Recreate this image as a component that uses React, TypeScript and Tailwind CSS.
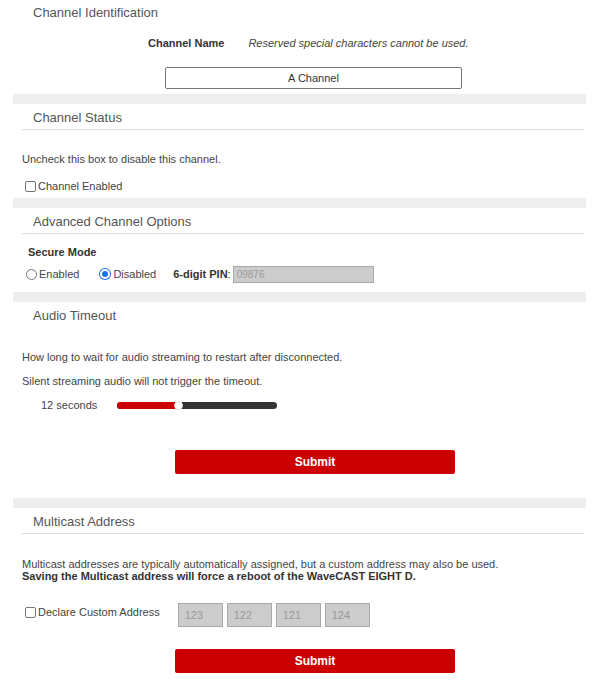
import React from "react";

const font = { fontFamily: '"Liberation Sans", Arial, sans-serif' };

function Band() {
  return <div className="h-[10px] bg-[#eeeeee]" />;
}

function Heading({ title, line = true }: { title: string; line?: boolean }) {
  return (
    <div
      className={
        "h-[26px] ml-[9px] mr-[2px] pl-[11px] pt-[2px] flex items-center text-[13px] text-[#555]" +
        (line ? " border-b border-[#dddddd]" : "")
      }
    >
      {title}
    </div>
  );
}

function Check() {
  return <span className="inline-block w-[11px] h-[11px] border border-[#767676] rounded-[2px] bg-white mr-[2px]" />;
}

function SubmitBtn() {
  return (
    <div className="ml-[162px] w-[280px] h-[24px] bg-[#cc0000] rounded-[2px] flex items-center justify-center text-white text-[12px] font-bold">
      Submit
    </div>
  );
}

export default function App() {
  return (
    <div className="w-[596px] h-[689px] bg-white text-[11px] text-[#333]" style={font}>
      <div className="ml-[13px] w-[573px]">
        {/* Channel Identification */}
        <div className="h-[25px] pl-[20px] flex items-center text-[13px] text-[#555]">Channel Identification</div>
        <div className="h-[36px] pl-[135px] flex items-center">
          <span className="font-bold text-[#333]">Channel Name</span>
          <span className="ml-[24px] italic text-[#444]">Reserved special characters cannot be used.</span>
        </div>
        <div className="mt-[6px] ml-[152px] w-[297px] h-[22px] border border-[#767676] rounded-[2px] flex items-center justify-center text-[#333]">
          A Channel
        </div>
        <div className="h-[5px]" />
        <Band />

        {/* Channel Status */}
        <Heading title="Channel Status" />
        <div className="mt-[21px] pl-[9px] h-[16px] flex items-center text-[#444]">Uncheck this box to disable this channel.</div>
        <div className="mt-[11px] pl-[12px] h-[16px] flex items-center text-[#444]">
          <Check />
          Channel Enabled
        </div>
        <div className="h-[4px]" />
        <Band />

        {/* Advanced Channel Options */}
        <Heading title="Advanced Channel Options" />
        <div className="mt-[10px] pl-[15px] h-[16px] flex items-center font-bold text-[#333]">Secure Mode</div>
        <div className="mt-[5px] pl-[13px] h-[18px] flex items-center text-[#444]">
          <span className="inline-block w-[11px] h-[11px] rounded-full border border-[#767676] bg-white mr-[2px]" />
          <span>Enabled</span>
          <span className="ml-[20px] inline-flex items-center justify-center w-[12px] h-[12px] rounded-full bg-[#1a73e8] mr-[2px]">
            <span className="w-[10px] h-[10px] rounded-full border-2 border-white bg-[#1a73e8]" />
          </span>
          <span>Disabled</span>
          <span className="ml-[17px] font-bold text-[#333]">6-digit PIN</span>
          <span className="text-[#333]">:</span>
          <div className="ml-[2px] w-[141px] h-[17px] border border-[#a9a9a9] bg-[#cccccc] pl-[3px] flex items-center text-[10px] text-[#999]">
            09876
          </div>
        </div>
        <div className="h-[9px]" />
        <Band />

        {/* Audio Timeout */}
        <Heading title="Audio Timeout" line={false} />
        <div className="mt-[21px] pl-[9px] h-[16px] flex items-center text-[#444]">
          How long to wait for audio streaming to restart after disconnected.
        </div>
        <div className="mt-[8px] pl-[9px] h-[16px] flex items-center text-[#444]">
          Silent streaming audio will not trigger the timeout.
        </div>
        <div className="mt-[8px] pl-[28px] h-[16px] flex items-center text-[#444]">
          <span>12 seconds</span>
          <div className="ml-[20px] relative w-[160px] h-[7px] rounded-full bg-[#333] flex">
            <div className="w-[61px] h-[7px] rounded-l-full bg-[#cc0000]" />
            <div className="absolute left-[57px] top-[-1px] w-[9px] h-[9px] rounded-full bg-white border border-[#ddd]" />
          </div>
        </div>
        <div className="h-[37px]" />
        <SubmitBtn />
        <div className="h-[24px]" />
        <Band />

        {/* Multicast Address */}
        <Heading title="Multicast Address" />
        <div className="mt-[24px] pl-[9px] leading-[12px] text-[#444]">
          <div>Multicast addresses are typically automatically assigned, but a custom address may also be used.</div>
          <div className="font-bold text-[#333]">Saving the Multicast address will force a reboot of the WaveCAST EIGHT D.</div>
        </div>
        <div className="mt-[21px] h-[24px] flex items-start">
          <div className="pl-[12px] h-[18px] flex items-center text-[#444]">
            <Check />
            Declare Custom Address
          </div>
          <div className="ml-[18px] flex gap-[4px]">
            {["123", "122", "121", "124"].map((v) => (
              <div
                key={v}
                className="w-[45px] h-[24px] border border-[#a9a9a9] bg-[#cccccc] pl-[6px] flex items-center text-[11px] text-[#999]"
              >
                {v}
              </div>
            ))}
          </div>
        </div>
        <div className="h-[22px]" />
        <SubmitBtn />
      </div>
    </div>
  );
}
